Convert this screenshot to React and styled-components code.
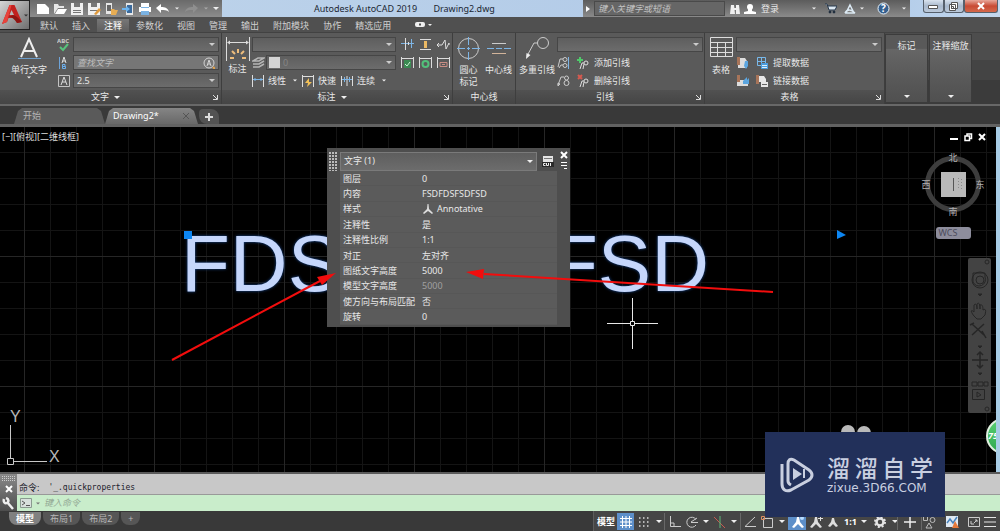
import React, { Component } from "react"
import styled, { createGlobalStyle } from "styled-components"

const sans = `"Noto Sans", "Noto Sans CJK SC", sans-serif`

const GlobalStyle = createGlobalStyle`
  * { box-sizing: border-box; }
  body {
    margin: 0;
    background: #000;
    color: #e8e8e8;
    font: 9px/12px ${sans};
  }
  button, input, select {
    margin: 0;
    padding: 0;
    border: none;
    border-radius: 0;
    background: none;
    color: inherit;
    font: inherit;
    outline: none;
  }
  a { color: inherit; text-decoration: none; }
  svg { display: block; flex: none; }
`

const Page = styled.div`
  display: flex;
  flex-direction: column;
  min-height: 100vh;
  overflow: hidden;
`

/* ---------- title bar and menu ---------- */

const Header = styled.header`
  display: grid;
  grid-template-columns: 30px 1fr;
  background: #505050;
`

const AppButton = styled.button`
  display: flex;
  align-items: center;
  justify-content: center;
  gap: 1px;
  height: 30px;
  border: 1px solid #222;
  border-left: none;
  background: linear-gradient(135deg, #d6d6d6, #a2a2a2 50%, #6e6e6e);
`

const TitleBar = styled.div`
  display: flex;
  height: 17px;
  background: linear-gradient(90deg, #8fb1dc, #bdd3ea 8%, #b4cce8 60%, #8fb4e0 66%, #c4d8ee);
`

const QuickAccess = styled.div`
  display: flex;
  align-items: center;
  gap: 3px;
  width: 192px;
  padding-left: 6px;
  background: linear-gradient(#6a6a6a, #8c8c8c);
`

const ToolButton = styled.button`
  display: flex;
  align-items: center;
  justify-content: center;
  width: ${p => p.$width || 14}px;
  height: 15px;
`

const WindowTitle = styled.h1`
  flex: 1;
  margin: 0;
  padding: 1px 0 0 92px;
  color: #1c2733;
  font: 9px/16px ${sans};
  white-space: pre;
`

const InfoCenter = styled.div`
  display: flex;
  align-items: center;
  width: 327px;
  background: linear-gradient(#5c5c5c, #8a8a8a);
`

const SearchInput = styled.input`
  width: 131px;
  height: 15px;
  margin: 0 4px 0 2px;
  padding: 0 3px;
  background: #666;
  border: 1px solid #4a4a4a;
  font-style: italic;
  &::placeholder { color: #c4c4c4; opacity: 1; }
`

const SignIn = styled.button`
  display: flex;
  align-items: center;
  gap: 5px;
  flex: 1;
  margin-left: 3px;
  text-align: left;
`

const WindowButtons = styled.div`
  display: flex;
  width: 90px;
  height: 13px;
  padding: 0 2px 0 13px;
`

const WindowButton = styled.button`
  display: flex;
  flex: ${p => (p.$close ? 34 : 20)};
  align-items: center;
  justify-content: center;
  border: 1px solid #56606c;
  border-top: none;
  border-radius: 0 0 3px 3px;
  background: ${p =>
    p.$close
      ? "linear-gradient(#e8a79a, #c84a34 50%, #d4694c)"
      : "linear-gradient(#d8e2ee, #a8b8cc 50%, #bccadb)"};
`

const Menu = styled.nav`
  display: flex;
  align-items: flex-end;
  height: 15px;
  padding-left: 3px;
`

const MenuItem = styled.a`
  height: 13px;
  padding: 1px 7px 0;
  color: ${p => (p.$active ? "#fff" : "#d0d0d0")};
  background: ${p => (p.$active ? "linear-gradient(#777, #5e5e5e)" : "none")};
  white-space: nowrap;
`

/* ---------- ribbon ---------- */

const Ribbon = styled.section`
  display: flex;
  height: 74px;
  border-top: 1px solid #424242;
  border-bottom: 2px solid #686868;
  background: linear-gradient(#4d4d4d 38%, #444 38%, #444 66%, #3b3b3b 66%);
`

const Panel = styled.div`
  display: flex;
  flex-direction: column;
  flex: none;
  border-right: 1px solid #3e3e3e;
  background: #5a5a5a;
`

const PanelBody = styled.div`
  display: flex;
  flex: 1;
  padding: 4px ${p => p.$end}px 0 ${p => p.$start}px;
`

const PanelFoot = styled.div`
  display: grid;
  grid-template-columns: ${p => (p.$plain ? "8px 1fr 8px" : "8px 1fr 18px")};
  align-items: center;
  height: 14px;
  background: linear-gradient(#515151, #454545);
  text-align: center;
  > svg { justify-self: end; margin-right: 3px; }
`

const FootTitle = styled.button`
  display: flex;
  grid-column: 2;
  align-items: center;
  justify-content: center;
  gap: 5px;
`

const BigButton = styled.button`
  display: flex;
  flex-direction: column;
  align-items: center;
  width: ${p => p.$width}px;
  height: 52px;
  line-height: 12px;
  white-space: nowrap;
`

const Stack = styled.div`
  display: flex;
  flex-direction: column;
  gap: 3px;
  padding-left: ${p => p.$indent || 0}px;
`

const Line = styled.div`
  display: flex;
  align-items: center;
  height: 15px;
  gap: ${p => p.$gap || 0}px;
`

const IconCell = styled.span`
  display: flex;
  width: ${p => p.$width}px;
`

const SmallButton = styled.button`
  display: flex;
  align-items: center;
  gap: 4px;
  padding-right: ${p => p.$end || 0}px;
  white-space: nowrap;
`

const ComboBox = styled.div`
  display: grid;
  align-items: center;
  width: ${p => p.$width}px;
  height: 15px;
  border: 1px solid #464646;
  background: linear-gradient(#5e5e5e, #6c6c6c);
  > * { grid-area: 1 / 1; }
  > svg { justify-self: end; margin-right: 3px; pointer-events: none; }
`

const Select = styled.select`
  width: 100%;
  height: 13px;
  padding-left: ${p => p.$indent || 3}px;
  appearance: none;
  color: ${p => (p.$muted ? "#858585" : "inherit")};
`

const FindInput = styled.input`
  width: 100%;
  height: 13px;
  padding-left: 3px;
  background: #767676;
  font-style: italic;
  &::placeholder { color: #bdbdbd; opacity: 1; }
`

const Swatch = styled.span`
  width: 11px;
  height: 11px;
  margin-left: 2px;
  background: #d4d4d4;
  pointer-events: none;
`

const MiniPanel = styled.button`
  display: flex;
  flex-direction: column;
  align-items: center;
  justify-content: space-between;
  width: 43px;
  margin: 1px 1px 1px 0;
  padding: 5px 0 4px;
  border: 1px solid #3c3c3c;
  background: linear-gradient(#595959 20%, #666 21%, #5a5a5a 60%, #505050);
  white-space: nowrap;
`

/* ---------- drawing tabs ---------- */

const FileTabs = styled.nav`
  display: flex;
  align-items: flex-end;
  height: 21px;
  padding-left: 14px;
  border-bottom: 3px solid #626262;
  background: #393939;
`

const FileTab = styled.a`
  display: flex;
  align-items: center;
  justify-content: space-between;
  width: ${p => (p.$active ? 93 : 91)}px;
  height: 16px;
  padding: 0 9px 0 ${p => (p.$active ? 8 : 9)}px;
  clip-path: polygon(0 100%, 4px 3px, 8px 0, calc(100% - 8px) 0, calc(100% - 4px) 3px, 100% 100%);
  color: ${p => (p.$active ? "#fff" : "#b4b4b4")};
  background: ${p => (p.$active ? "linear-gradient(#858585, #686868)" : "#5a5a5a")};
`

const NewTab = styled.button`
  display: flex;
  align-items: center;
  justify-content: center;
  width: 20px;
  height: 15px;
  margin-left: 1px;
  border-radius: 4px 8px 0 8px;
  background: #535353;
`

/* ---------- model space ---------- */

const Canvas = styled.main`
  position: relative;
  flex: 1;
  overflow: hidden;
  border-right: 4px solid #a8cde6;
  background-color: #000;
  background-image: linear-gradient(90deg, #262626 1px, transparent 1px),
    linear-gradient(#262626 1px, transparent 1px),
    linear-gradient(90deg, #141414 1px, transparent 1px),
    linear-gradient(#141414 1px, transparent 1px);
  background-size: 130px 130px, 130px 130px, 26px 26px, 26px 26px;
  background-position: 24px 0, 0 129px, 24px 0, 0 25px;
`

const ViewLabel = styled.button`
  position: absolute;
  top: 4px;
  left: 2px;
  color: #ddd;
`

const ViewButtons = styled.div`
  position: absolute;
  top: 6px;
  right: 9px;
  display: flex;
  gap: 5px;
`

const DrawingText = styled.div`
  position: absolute;
  top: 92px;
  left: 181px;
  display: flex;
  gap: 208px;
  color: #c5d6fb;
  font: 80px/90px "Liberation Sans", Arial, sans-serif;
  text-shadow: 0 0 3px #1d4f9c;
`

const Markup = styled.svg`
  position: absolute;
  top: 0;
  left: 0;
  pointer-events: none;
`

const UcsIcon = styled.svg`
  position: absolute;
  bottom: 4px;
  left: 0;
`

const ViewCube = styled.div`
  position: absolute;
  top: 25px;
  right: 8px;
  display: flex;
  flex-direction: column;
  align-items: center;
  gap: 7px;
  width: 70px;
`

const WcsButton = styled.button`
  width: 35px;
  height: 12px;
  padding-right: 10px;
  border-radius: 3px;
  background: #8d8d9c;
  color: #4c4c5c;
  line-height: 12px;
`

const NavBar = styled.div`
  position: absolute;
  top: 131px;
  right: 5px;
  width: 23px;
  height: 155px;
  border-radius: 2px;
  background: #434343;
`

const Props = styled.section`
  position: absolute;
  top: 21px;
  left: 327px;
  display: grid;
  grid-template-columns: 13px 217px 13px;
  width: 243px;
  height: 179px;
  padding-top: 3px;
  background: #4e4e4e;
`

const Grip = styled.div`
  height: 19px;
  margin: 1px 3px 0 2px;
  background: radial-gradient(circle at 1px 1px, #bbb 1px, transparent 1px) 0 0 / 3px 3px;
`

const PropsHead = styled.div`
  display: flex;
  align-items: center;
  gap: 5px;
  height: 20px;
`

const ObjectType = styled(ComboBox)`
  height: 19px;
  border-color: #7a7a7a;
`

const PropTable = styled.table`
  width: 217px;
  height: 154px;
  border-collapse: collapse;
  background: #5b5b5b;
  th, td {
    padding: 1px 0 0 3px;
    border-bottom: 1px solid #575757;
    font-weight: 400;
    text-align: left;
    white-space: nowrap;
    line-height: 12px;
  }
  th { width: 79px; }
`

const PropValue = styled.span`
  display: flex;
  align-items: center;
  gap: 3px;
  color: ${p => (p.$muted ? "#a0a0a0" : "inherit")};
`

const PropsSide = styled.div`
  display: flex;
  flex-direction: column;
  align-items: center;
  gap: 2px;
`

const FloatBall = styled.button`
  position: absolute;
  top: 291px;
  right: -26px;
  width: 36px;
  height: 36px;
  padding: 0 22px 0 0;
  border: 2px solid #e0f0e0;
  border-radius: 50%;
  background: linear-gradient(#59cf74, #2fa84e);
  color: #fff;
  font-style: italic;
  font-weight: 700;
`

/* ---------- command line ---------- */

const Command = styled.section`
  display: grid;
  grid-template-columns: 17px 1fr;
  height: 39px;
  border-top: 2px solid #5a5a5a;
`

const CommandSide = styled.div`
  display: flex;
  flex-direction: column;
  align-items: center;
  justify-content: space-between;
  padding: 2px 0 1px;
  background: linear-gradient(#8a8a8a, #4e4e4e);
`

const History = styled.output`
  display: flex;
  align-items: flex-end;
  gap: 9px;
  height: 21px;
  padding: 0 1px 0 2px;
  background: #c8c8c8;
  color: #1c1c2c;
  border-bottom: 1px solid #999;
  code { font: 8px/12px "DejaVu Sans Mono", monospace; }
`

const Prompt = styled.label`
  display: flex;
  align-items: center;
  gap: 4px;
  height: 16px;
  padding-left: 3px;
  background: #c9edcb;
`

const PromptInput = styled.input`
  flex: 1;
  font-style: italic;
  &::placeholder { color: #93a894; opacity: 1; }
`

/* ---------- status bar ---------- */

const StatusBar = styled.footer`
  display: flex;
  justify-content: space-between;
  height: 20px;
  background: #393939;
`

const LayoutTabs = styled.nav`
  display: flex;
  gap: 2px;
  padding: 1px 0 0 9px;
`

const LayoutTab = styled.a`
  height: 13px;
  padding: 0 7px;
  border-radius: 0 0 8px 8px;
  line-height: 13px;
  color: ${p => (p.$active ? "#fff" : "#b8b8b8")};
  font-weight: ${p => (p.$active ? 700 : 400)};
  background: ${p => (p.$active ? "#808080" : "#565656")};
`

const StatusTools = styled.div`
  display: flex;
  padding-top: 2px;
  border-left: 1px solid #5c5c5c;
  background: #464646;
`

const StatusCell = styled.button`
  display: flex;
  align-items: center;
  justify-content: center;
  width: ${p => p.$width}px;
  height: 17px;
  border-left: 1px solid ${p => (p.$split ? "#686868" : "transparent")};
  background: ${p => (p.$on ? "#5d8fc9" : "none")};
  color: #fff;
  font-weight: 700;
  white-space: nowrap;
`

const Watermark = styled.aside`
  position: fixed;
  right: 55px;
  bottom: 14px;
  display: flex;
  align-items: center;
  gap: 12px;
  width: 180px;
  height: 85px;
  padding-left: 14px;
  background: #22305a;
  color: #c9cfe0;
`

const Brand = styled.div`
  width: 106px;
  font: 12px/14px "DejaVu Sans", sans-serif;
`

const BrandName = styled.div`
  display: flex;
  justify-content: space-between;
  padding-bottom: 2px;
  font: 500 23px/24px "Noto Sans CJK SC", sans-serif;
`

/* ---------- icons ---------- */

const Caret = ({ size = 6, color = "#eee" }) => (
  <svg width={size} height="3" viewBox="0 0 6 3" fill={color}>
    <path d="M0 0h6L3 3z" />
  </svg>
)

const drawings = {
  app: (
    <g stroke="none">
      <path fill="#c2211f" d="M1 20 8.5 1h5L21 18l-5 1-2-5H7.500l-1.500 4z" />
      <path fill="#e8433c" d="M1 20 8.500 1h2L6 18z" />
      <path fill="#b6b6b6" d="M10.500 6 8.500 11H13z" />
      <path fill="#8e1512" d="M6 14c3-2 6-1 10 5l5-1c-3-3-5-6-9-7z" />
    </g>
  ),
  newFile: <path fill="#fff" stroke="none" d="M1 2h8l4 4v6H1z" />,
  open: (
    <g stroke="none">
      <path fill="#e6e6e6" d="M1 12V2h4l1 2h5v2H5z" />
      <path fill="#fff" d="M5 7h9l-3 5H2z" />
    </g>
  ),
  save: (
    <g stroke="none">
      <path fill="#f0f0f0" d="M1 1h12v12H1z" />
      <path fill="#777" d="M4 1h6v4H4zM3 8h8v1H3zM3 10h8v1H3z" />
    </g>
  ),
  saveAs: (
    <g stroke="none">
      <path fill="#f0f0f0" d="M1 1h12v12H1z" />
      <path fill="#777" d="M4 1h6v4H4zM3 8h8v1H3z" />
      <path fill="#e09a3c" d="m7 12 5-6 2 2-5 5z" />
    </g>
  ),
  cloudOpen: (
    <g stroke="none">
      <path fill="#e6e6e6" d="M2 1h6v11H2z" />
      <path fill="#666" d="M3 3h4v6H3z" />
      <path fill="#e7ad54" d="M7 7h3l1 1h3l-2 5H7z" />
    </g>
  ),
  cloudSave: (
    <g stroke="none">
      <path fill="#e6e6e6" d="M5 1h7v12H5z" />
      <path fill="#3b6a9c" d="M6 3h5v8H6z" />
      <path fill="#6db4ee" d="M1 6h4V4l4 3-4 3V8H1z" />
    </g>
  ),
  print: (
    <g stroke="none">
      <path fill="#fff" d="M3 1h8v4H3zM1 5h12v5H1z" />
      <path fill="#7bb3e3" d="M3 9h8v4H3zM3 5h8v1H3z" />
    </g>
  ),
  undo: <path fill="#fff" stroke="none" d="m1 6 5-4v3c4 0 7 1 8 5-2-2-5-2-8-2v3z" />,
  redo: <path fill="#8f8f8f" stroke="none" d="M13 6 8 2v3c-4 0-7 1-8 5 2-2 5-2 8-2v3z" />,
  binoculars: (
    <g fill="#f0f0f0" stroke="none">
      <path d="M2 2h3l1 9H1zM7 2h3l1 9H7zM5 5h2v2H5z" />
    </g>
  ),
  user: (
    <g fill="#fff" stroke="none">
      <circle cx="6" cy="4" r="3" />
      <path d="M4 6h4v2l4 1v2H0V9l4-1z" />
    </g>
  ),
  cart: (
    <g stroke="#25364a">
      <path fill="#dce8f2" d="M1 2h2l2 6h6l2-4H4" />
      <circle cx="6" cy="10" r="1" />
      <circle cx="10" cy="10" r="1" />
    </g>
  ),
  a360: <path fill="none" stroke="#dceaf4" strokeWidth="1.500" d="m6 2 4 8H2zM1 10c2-4 6-4 10 0" />,
  bigA: (
    <g fill="none">
      <path stroke="#eee" strokeWidth="2" d="m3 20 8-18 8 18M6 14h10" />
      <path stroke="#6d9dca" d="M0 21.500h23" />
    </g>
  ),
  spell: (
    <g>
      <text x="0" y="5" fontSize="6" fontWeight="700" fill="#ccc" stroke="none">ABC</text>
      <path fill="none" stroke="#58c27c" strokeWidth="2" d="m3 9 3 3 5-6" />
    </g>
  ),
  textAlign: (
    <g fill="none">
      <path d="M2.500 1v12" stroke="#6da3d8" />
      <path d="m5 7 2-6 2 6M5.500 5h3" stroke="#ddd" />
      <path d="M5.500 8.500H8v2H5.500zM5.500 10.500h3v2h-3z" stroke="#6db0ee" />
    </g>
  ),
  textHeight: (
    <g>
      <path fill="none" stroke="#c4c4c4" d="M1.500 1.500h11v11h-11z" />
      <path fill="none" stroke="#ddd" d="M4 11 7 3l3 8M5 8h4" />
    </g>
  ),
  findText: (
    <g fill="none" stroke="#d4d4d4">
      <circle cx="6" cy="6" r="5" />
      <path d="m4 9 2-6 2 6M5 7h2" />
      <path stroke="#e2a24c" strokeWidth="2" d="m10 10 2 2" />
    </g>
  ),
  dimension: (
    <g fill="none">
      <path stroke="#ddd" d="M.5 0v24M23.500 0v24M2 5.500h20" />
      <path fill="#ddd" stroke="none" d="m1 5.500 3-2v4zM23 5.500l-3-2v4z" />
      <path stroke="#eebd7c" strokeWidth="2" d="M12 12v4M6 14l3 3M18 14l-3 3M4 21h4M16 21h4" />
    </g>
  ),
  layers: (
    <g fill="none" stroke="#b5b5b5" strokeWidth="1.500">
      <path d="m1 5 5-3h6L7 5zM1 8h6l5-3M1 11h6l5-3" />
    </g>
  ),
  dimBreak: (
    <g fill="none">
      <path stroke="#7db5e6" d="M0 5.500h13M4.500 3v5M10.500 1v9" />
      <path stroke="#ddd" d="M4.500 0v12M7.500 4v3" />
    </g>
  ),
  dimSpace: (
    <g fill="none">
      <path stroke="#ddd" d="M1 1.500h11M1 11.500h11" />
      <path stroke="#ebb964" strokeWidth="3" d="M6.500 3v7" />
    </g>
  ),
  jog: <path fill="none" stroke="#ddd" d="M0 7h5l3-5 1 9 3-6v2M0 7l2-2M0 7l2 2" />,
  dimCheck: (
    <g fill="none">
      <path stroke="#ddd" d="M.5 1v11M12.500 1v11M1 2.500h11" />
      <path fill="#3b8a52" stroke="none" d="M3 4h7v8H3z" />
      <path stroke="#c8f2d2" d="m4 8 2 2 3-4" />
    </g>
  ),
  dimUpdate: (
    <g fill="none">
      <path stroke="#ddd" d="M.5 1v11M12.500 1v11M1 2.500h11" />
      <circle cx="6.500" cy="8" r="3" stroke="#52c07a" strokeWidth="2" />
    </g>
  ),
  dimRemove: (
    <g fill="none">
      <path stroke="#ddd" d="M.5 1v11M12.500 1v11M1 2.500h11" />
      <path stroke="#c98d84" d="M3 6.500h7v4H3zM5 8.500h3" />
    </g>
  ),
  linear: (
    <g fill="none">
      <path stroke="#ddd" d="M.5 1v12M11.500 1v12" />
      <path stroke="#7db5e6" d="M1 5.500h10M3 4v3M9 4v3" />
    </g>
  ),
  quick: (
    <g fill="none">
      <path stroke="#ddd" d="M.5 1v12M11.500 1v12M1 2.500h10" />
      <path fill="#f2c057" stroke="none" d="M7 4 3 9h3l-1 4 5-5H7z" />
    </g>
  ),
  continued: (
    <g fill="none">
      <path stroke="#ddd" d="M.5 2v10M6 2v10M11.500 2v10" />
      <path stroke="#7db5e6" d="M1 5.500h10M3.500 3v5M8.500 3v5" />
    </g>
  ),
  centerMark: (
    <g fill="none">
      <circle cx="11.500" cy="11.500" r="10" stroke="#ccc" />
      <path stroke="#7db5e6" d="M0 11.500h8m2 0h3m2 0h8M11.500 0v8m0 2v3m0 2v8" />
    </g>
  ),
  centerLine: (
    <g fill="none">
      <path stroke="#ccc" d="M5 6.500h14" />
      <path stroke="#7db5e6" d="M0 11.500h7m2 0h6m2 0h7" />
      <path stroke="#d2b49a" d="M5 16.500h14" />
    </g>
  ),
  leader: (
    <g fill="none" stroke="#ccc">
      <circle cx="18" cy="6" r="5.500" />
      <path d="M12.500 6H9L2 19" />
      <path fill="#eee" stroke="none" d="m1 22 .5-6 4 2z" />
    </g>
  ),
  leaderAlign: (
    <g fill="none" stroke="#ccc">
      <path d="M11.500 1v12" stroke="#7db5e6" />
      <circle cx="8" cy="3.500" r="2" />
      <circle cx="8" cy="9.500" r="2" />
      <path d="M6 3H3L1 11M6 9H4l-2 3" />
    </g>
  ),
  leaderCollect: (
    <g fill="none" stroke="#ccc">
      <circle cx="9.500" cy="4" r="2" />
      <circle cx="9.500" cy="9" r="2.500" />
      <path d="M7 3H4L1 11" />
      <path d="m1 12 0-3 2 1z" />
    </g>
  ),
  leaderAdd: (
    <g fill="none" stroke="#ddd">
      <circle cx="9" cy="7" r="2" />
      <path d="M7 7H5l-2 6M7 8l-1 5" />
      <path stroke="#4fc96a" strokeWidth="2" d="M0 4h6M3 1v6" />
    </g>
  ),
  leaderRemove: (
    <g fill="none" stroke="#ddd">
      <circle cx="9" cy="7" r="2" />
      <path d="M7 7H5l-2 6M7 8l-1 5" />
      <path stroke="#d65a50" strokeWidth="2" d="m1 1 4 4m0-4L1 5" />
    </g>
  ),
  table: (
    <g fill="none" stroke="#ddd">
      <path d="M.5.5h22v19H.5zM.5 5.500h22M.5 10.500h22M.5 15.500h22M7.500 5v15M15.500 5v15" />
    </g>
  ),
  linkDown: (
    <g stroke="none">
      <path fill="#ddd" d="M2 2h7l2 3v7H2z" />
      <path fill="#a8755a" d="M1 1h3v8H1z" />
      <path fill="#5ca6e0" d="M9 5h3v5l-2 3-2-3z" />
    </g>
  ),
  linkUp: (
    <g stroke="none">
      <path fill="#ddd" d="M1 6h11v6H1z" />
      <path fill="#a8755a" d="M1 1h3v7H1z" />
      <path fill="#5ca6e0" d="m7 7 4-4v3l2-2v6H7z" />
    </g>
  ),
  extract: (
    <g>
      <path fill="none" stroke="#78b8ea" d="M1.500 1.500h8v8h-8zM1 5.500h9M5.500 1v9" />
      <path fill="#4b9cdd" stroke="none" d="M5 7h7v6H5z" />
      <path stroke="#dceefb" d="M6 9.500h5M6 11.500h5" />
    </g>
  ),
  dataLink: (
    <g stroke="none">
      <path fill="#a8755a" d="M0 1h3v9H0z" />
      <path fill="#e8e8e8" d="M3 2h5l2 3v3H3zM5 8h7v5H5z" />
      <path fill="#666" d="M6 10h5v1H6z" />
    </g>
  ),
  launcher: <path fill="none" stroke="#ddd" d="M1 1l4 4M5.500 1v4.500H1" />,
  closeX: <path fill="none" stroke="#fff" strokeWidth="2" d="m1 1 6 6m0-6L1 7" />,
  minimize: <path stroke="#fff" strokeWidth="2" d="M0 6h8" />,
  restore: (
    <path fill="none" stroke="#fff" strokeWidth="1.500" d="M1 3h4.500v4.500H1zM3 3V1h4.500v4.500H6" />
  ),
  plus: <path fill="none" stroke="#ddd" strokeWidth="2" d="M4 0v8M0 4h8" />,
  annotative: <path fill="#ddd" stroke="none" d="M5.500 0h1L7 5l4 4-1 1-4-3-4 3-1-1 4-4z" />,
  cui: (
    <g stroke="none">
      <path fill="#e4e4e4" d="M1 1h10v6H1z" />
      <path fill="#777" d="M2 3h8v1H2z" />
      <path fill="#2a2a2a" d="M0 7h12v5H0z" />
      <path stroke="#eee" fill="none" d="M3.500 8.500h-2v2h2M4.500 8v2.500h2V8M8.500 8v3" />
    </g>
  ),
  settings: <path stroke="#fff" d="M0 1.500h6M0 4.500h6M3 7.500h3" />,
  wrench: (
    <path
      fill="none"
      stroke="#eee"
      strokeWidth="2.500"
      d="m5 5 6 7M2 2c-1 3 1 5 3 4s2-4-1-5"
    />
  ),
  terminal: (
    <g fill="none">
      <path fill="#d8e0dc" stroke="#8a9a90" d="M.5.5h11v9H.5z" />
      <path stroke="#555" d="m2 3 3 2-3 2M6 7.500h4" />
    </g>
  ),
  gridOn: <path stroke="#fff" d="M1 3.500h12M1 7h12M1 10.500h12M3.500 1v12M7 1v12M10.500 1v12" />,
  snap: (
    <path stroke="#ddd" strokeWidth="1.500" strokeDasharray="1.500 2.500" d="M2 3h10M2 7h10M2 11h10" />
  ),
  ortho: <path fill="none" stroke="#ccc" d="M2.500 1v10.500H13M2.500 8H6v3.500" />,
  polar: (
    <g fill="none" stroke="#ccc">
      <path d="M11 4.500A5 5 0 1 0 11 10M6 7l6-4M6 7.500h7" />
    </g>
  ),
  isometric: (
    <g fill="none">
      <path stroke="#c85a50" d="m1 2 11 11" />
      <path stroke="#5cb878" d="M7 1v12" />
    </g>
  ),
  track: <path fill="none" stroke="#ccc" d="M12 2 2 11.500h11" />,
  osnap: (
    <g fill="none">
      <path stroke="#ccc" d="M3.500 3.500h9v9h-9z" />
      <path stroke="#dd8f62" d="M1.500 1.500h3v3h-3z" />
    </g>
  ),
  annoOn: (
    <g fill="#fff" stroke="none">
      <path d="M6 2h2l1 5 4 5-2 1-4-4-4 4-2-1 4-5z" />
      <circle cx="11" cy="3" r="2" fill="#b8dcff" />
    </g>
  ),
  annoAuto: (
    <g fill="#ddd" stroke="none">
      <path d="M6 2h2l1 5 4 5-2 1-4-4-4 4-2-1 4-5z" />
      <path d="M9 3h5v1H9zM11 1h1v5h-1z" />
    </g>
  ),
  annoScale: <path fill="#ddd" stroke="none" d="M6 3h2l1 4 3 4-2 1-3-3-3 3-2-1 3-4z" />,
  gear: (
    <g fill="none" stroke="#e4e4e4">
      <circle cx="7" cy="7" r="3.500" strokeWidth="2.500" />
      <circle cx="7" cy="7" r="5" strokeWidth="2" strokeDasharray="2 1.930" />
    </g>
  ),
  cross: <path stroke="#eee" strokeWidth="1.500" d="M7 1v12M1 7h12" />,
  isolate: (
    <g fill="none" stroke="#bbb">
      <path d="M1.500 1.500h4v4h-4zM7 8l3 5H4z" />
      <circle cx="10.500" cy="5" r="2.500" />
    </g>
  ),
  graphics: (
    <g stroke="none">
      <path fill="#dfe8f2" d="M1 1h12v11H1z" />
      <path fill="none" stroke="#4682bd" strokeWidth="1.500" d="m2 8 3-4 3 4 4-6" />
      <path fill="#e5793a" d="m10 6 4 7H7z" />
    </g>
  ),
  clean: <path fill="none" stroke="#ccc" d="M1.500 2.500h11v9h-11zM4 6v3h3M10 5 7 8M8 5h2v2" />,
  menu: <path stroke="#e4e4e4" d="M1 2.500h12M1 7h12M1 11.500h12" />,
}

const Icon = ({ name, size = 14, height }) => (
  <svg width={size} height={height || size} viewBox={`0 0 ${size} ${height || size}`}>
    {drawings[name]}
  </svg>
)

const Combo = ({ width, label, value = "", children, indent, muted }) => (
  <ComboBox $width={width}>
    <Select aria-label={label} $indent={indent} $muted={muted} defaultValue={value}>
      <option>{value}</option>
    </Select>
    {children}
    <Caret color="#ccc" />
  </ComboBox>
)

const Foot = ({ title, more, launcher = true }) => (
  <PanelFoot $plain={!launcher}>
    <FootTitle>
      {title}
      {more && <Caret />}
    </FootTitle>
    {launcher && <Icon name="launcher" size={6} />}
  </PanelFoot>
)

/* ---------- data ---------- */

const quickTools = ["newFile", "open", "save", "saveAs", "cloudOpen", "cloudSave", "print", "undo"]

const menuItems = [
  "默认", "插入", "注释", "参数化", "视图", "管理", "输出", "附加模块", "协作", "精选应用",
]

const properties = [
  ["图层", "0"],
  ["内容", "FSDFDSFSDFSD"],
  ["样式", "Annotative"],
  ["注释性", "是"],
  ["注释性比例", "1:1"],
  ["对正", "左对齐"],
  ["图纸文字高度", "5000"],
  ["模型文字高度", "5000"],
  ["使方向与布局匹配", "否"],
  ["旋转", "0"],
]

const statusItems = [
  { text: "模型", width: 23 },
  { icon: "gridOn", width: 17, on: true },
  { icon: "snap", width: 18 },
  { caret: true, width: 12 },
  { icon: "ortho", width: 20, split: true },
  { icon: "polar", width: 14 },
  { caret: true, width: 14 },
  { icon: "isometric", width: 14 },
  { caret: true, width: 14 },
  { icon: "track", width: 18, split: true },
  { icon: "osnap", width: 16 },
  { caret: true, width: 14 },
  { icon: "annoOn", width: 18, on: true },
  { icon: "annoAuto", width: 18 },
  { icon: "annoScale", width: 17 },
  { text: "1:1", width: 18 },
  { caret: true, width: 8 },
  { icon: "gear", width: 24 },
  { caret: true, width: 6 },
  { icon: "cross", width: 24, split: true },
  { icon: "isolate", width: 14, split: true },
  { icon: "graphics", width: 32 },
  { icon: "clean", width: 12 },
  { icon: "menu", width: 21 },
]

/* ---------- sections ---------- */

const TopBar = () => (
  <Header>
    <AppButton aria-label="应用程序菜单">
      <Icon name="app" size={22} />
      <Caret size={4} color="#333" />
    </AppButton>
    <div>
      <TitleBar>
        <QuickAccess>
          {quickTools.map(name => (
            <ToolButton key={name} aria-label={name}>
              <Icon name={name} />
            </ToolButton>
          ))}
          <ToolButton $width={10} aria-label="放弃列表"><Caret size={4} /></ToolButton>
          <ToolButton aria-label="重做"><Icon name="redo" /></ToolButton>
          <ToolButton $width={8} aria-label="重做列表"><Caret size={4} color="#aaa" /></ToolButton>
          <ToolButton $width={6} aria-label="自定义"><Caret /></ToolButton>
        </QuickAccess>
        <WindowTitle>{"Autodesk AutoCAD 2019       Drawing2.dwg"}</WindowTitle>
        <InfoCenter>
          <ToolButton $width={9} aria-label="展开">
            <svg width="4" height="6" fill="#fff"><path d="M0 0v6l4-3z" /></svg>
          </ToolButton>
          <SearchInput aria-label="搜索" placeholder="键入关键字或短语" />
          <Icon name="binoculars" size={12} />
          <SignIn>
            <Icon name="user" size={12} />
            登录
          </SignIn>
          <Caret size={4} />
          <ToolButton $width={28} aria-label="商店"><Icon name="cart" size={13} /></ToolButton>
          <Icon name="a360" size={12} />
          <ToolButton $width={12} aria-label="更多"><Caret size={4} /></ToolButton>
          <ToolButton $width={30} aria-label="帮助">
            <svg width="13" height="13">
              <circle cx="6.500" cy="6.500" r="5.500" fill="#35608f" stroke="#e9f1f8" />
              <text x="4" y="10" fontSize="10" fontWeight="700" fill="#fff">?</text>
            </svg>
          </ToolButton>
          <ToolButton $width={12} aria-label="帮助菜单"><Caret size={4} /></ToolButton>
        </InfoCenter>
        <WindowButtons>
          <WindowButton aria-label="最小化">
            <svg width="10" height="5"><path fill="#fff" stroke="#555" d="M.5 1.500h9v3h-9z" /></svg>
          </WindowButton>
          <WindowButton aria-label="还原">
            <svg width="9" height="9">
              <path fill="#fff" stroke="#555" d="M2.500.5h6v6h-6zM.5 2.500h6v6h-6zM2.500 4.500h2v2h-2z" />
            </svg>
          </WindowButton>
          <WindowButton $close aria-label="关闭"><Icon name="closeX" size={8} /></WindowButton>
        </WindowButtons>
      </TitleBar>
      <Menu>
        {menuItems.map(item => (
          <MenuItem key={item} href="#" $active={item === "注释"}>{item}</MenuItem>
        ))}
        <ToolButton $width={50} aria-label="功能区选项">
          <svg width="17" height="6" fill="#eee">
            <path d="M2 0h6a2 2 0 0 1 2 2v1a2 2 0 0 1-2 2H2a2 2 0 0 1-2-2V2a2 2 0 0 1 2-2zm2 1.500v2h2v-2zM13 2h4l-2 2z" />
          </svg>
        </ToolButton>
      </Menu>
    </div>
  </Header>
)

const RibbonBar = () => (
  <Ribbon>
    <Panel>
      <PanelBody $start={5} $end={2}>
        <BigButton $width={48}>
          <Icon name="bigA" size={23} height={27} />
          单行文字
          <Caret size={4} />
        </BigButton>
        <Stack $indent={4}>
          <Line>
            <IconCell $width={16}><Icon name="spell" size={13} height={14} /></IconCell>
            <Combo width={146} label="文字样式" />
          </Line>
          <Line>
            <IconCell $width={16}><Icon name="textAlign" /></IconCell>
            <ComboBox $width={146}>
              <FindInput aria-label="查找文字" placeholder="查找文字" />
              <Icon name="findText" size={12} />
            </ComboBox>
          </Line>
          <Line>
            <IconCell $width={16}><Icon name="textHeight" /></IconCell>
            <Combo width={146} label="文字高度" value="2.5" />
          </Line>
        </Stack>
      </PanelBody>
      <Foot title="文字" more />
    </Panel>

    <Panel>
      <PanelBody $start={2} $end={2}>
        <BigButton $width={27}>
          <Icon name="dimension" size={24} height={26} />
          标注
        </BigButton>
        <Stack $indent={1}>
          <Line $gap={5}>
            <Combo width={144} label="标注样式" />
            <Icon name="dimBreak" size={13} />
            <Icon name="dimSpace" size={13} />
            <Icon name="jog" size={13} />
          </Line>
          <Line $gap={5}>
            <Line>
              <IconCell $width={14}><Icon name="layers" size={13} /></IconCell>
              <Combo width={130} label="标注图层" value="0" indent={16} muted><Swatch /></Combo>
            </Line>
            <Icon name="dimCheck" size={13} />
            <Icon name="dimUpdate" size={13} />
            <Icon name="dimRemove" size={13} />
          </Line>
          <Line $gap={5}>
            <SmallButton $end={2}><Icon name="linear" size={12} height={14} />线性</SmallButton>
            <Caret size={4} />
            <SmallButton><Icon name="quick" size={12} height={14} />快速</SmallButton>
            <SmallButton $end={2}><Icon name="continued" size={12} height={14} />连续</SmallButton>
            <Caret size={4} />
          </Line>
        </Stack>
      </PanelBody>
      <Foot title="标注" more />
    </Panel>

    <Panel>
      <PanelBody $start={2} $end={0}>
        <BigButton $width={27}>
          <Icon name="centerMark" size={23} height={27} />
          圆心<br />标记
        </BigButton>
        <BigButton $width={33}>
          <Icon name="centerLine" size={24} height={27} />
          中心线
        </BigButton>
      </PanelBody>
      <Foot title="中心线" launcher={false} />
    </Panel>

    <Panel>
      <PanelBody $start={2} $end={1}>
        <BigButton $width={38}>
          <Icon name="leader" size={24} height={27} />
          多重引线
        </BigButton>
        <Stack $indent={1}>
          <Combo width={146} label="多重引线样式" />
          <Line>
            <IconCell $width={20}><Icon name="leaderAlign" /></IconCell>
            <SmallButton><Icon name="leaderAdd" size={13} />添加引线</SmallButton>
          </Line>
          <Line>
            <IconCell $width={20}><Icon name="leaderCollect" /></IconCell>
            <SmallButton><Icon name="leaderRemove" size={13} />删除引线</SmallButton>
          </Line>
        </Stack>
      </PanelBody>
      <Foot title="引线" />
    </Panel>

    <Panel>
      <PanelBody $start={3} $end={2}>
        <BigButton $width={26}>
          <Icon name="table" size={23} height={27} />
          表格
        </BigButton>
        <Stack $indent={2}>
          <Combo width={146} label="表格样式" />
          <Line>
            <IconCell $width={20}><Icon name="linkDown" /></IconCell>
            <SmallButton><Icon name="extract" size={13} />提取数据</SmallButton>
          </Line>
          <Line>
            <IconCell $width={20}><Icon name="linkUp" /></IconCell>
            <SmallButton><Icon name="dataLink" size={13} />链接数据</SmallButton>
          </Line>
        </Stack>
      </PanelBody>
      <Foot title="表格" />
    </Panel>

    <MiniPanel>标记<Caret /></MiniPanel>
    <MiniPanel>注释缩放<Caret /></MiniPanel>
  </Ribbon>
)

const QuickProperties = () => (
  <Props aria-label="快捷特性">
    <Grip />
    <div>
      <PropsHead>
        <ObjectType $width={197}>
          <Select aria-label="对象类型" defaultValue="文字 (1)">
            <option>文字 (1)</option>
          </Select>
          <Caret />
        </ObjectType>
        <Icon name="cui" size={12} />
      </PropsHead>
      <PropTable>
        <tbody>
          {properties.map(([name, value]) => (
            <tr key={name}>
              <th scope="row">{name}</th>
              <td>
                <PropValue $muted={name === "模型文字高度"}>
                  {name === "样式" && <Icon name="annotative" size={12} height={10} />}
                  {value}
                </PropValue>
              </td>
            </tr>
          ))}
        </tbody>
      </PropTable>
    </div>
    <PropsSide>
      <button aria-label="关闭"><Icon name="closeX" size={8} /></button>
      <button aria-label="选项"><Icon name="settings" size={6} height={8} /></button>
    </PropsSide>
  </Props>
)

const Compass = () => (
  <ViewCube>
    <svg width="70" height="68" viewBox="0 0 70 68">
      <circle cx="35" cy="32" r="25.500" fill="none" stroke="#3d3d3d" strokeWidth="5" />
      <path fill="#b9b9b9" d="M23 20h25v25H23z" />
      <path stroke="#555" fill="none" d="M35.500 26v13" />
      <path stroke="#8a8a8a" fill="none" strokeDasharray="1 2" d="M40.500 26v12M43.500 27v10" />
      <g fontSize="9" fill="#b0b0b0" textAnchor="middle">
        <text x="35" y="9">北</text>
        <text x="35" y="63">南</text>
        <text x="8" y="36">西</text>
        <text x="62" y="36">东</text>
      </g>
    </svg>
    <WcsButton>WCS</WcsButton>
  </ViewCube>
)

const Navigation = () => (
  <NavBar>
    <svg width="23" height="155" fill="none" stroke="#262626">
      <circle cx="19" cy="4" r="2" />
      <path d="M5 15h12v4a6 6 0 0 1-12 5z" />
      <circle cx="12" cy="22" r="8" />
      <circle cx="12" cy="22" r="4" />
      <path d="M10 36h4l-2 2zM10 88h4l-2 2zM10 115h4l-2 2z" fill="#262626" />
      <path d="M6 58c-4-5-3-7 0-4V47c2-2 3 0 3 4v-5c2-2 3 0 3 5v-4c2-1 3 1 3 5 3-2 3 1 2 5l-4 4H9z" />
      <path strokeWidth="1.500" d="m4 66 12 11M16 66 4 77M14 73l4 7M2 67l4-2" />
      <path strokeWidth="1.500" d="M12 94v16M4 102h16M9 97l3-3 3 3M9 107l3 3 3-3" />
      <path d="M4.500 131.500h12v10h-12zM9 134v5l4-2zM4 124h5v4H4zM10 124h5v4h-5zM16 124h4v4h-4z" />
      <circle cx="19" cy="151" r="2" />
    </svg>
  </NavBar>
)

const ModelSpace = () => (
  <Canvas>
    <ViewLabel>[−][俯视][二维线框]</ViewLabel>
    <ViewButtons>
      <button aria-label="最小化视口"><Icon name="minimize" size={9} /></button>
      <button aria-label="还原视口"><Icon name="restore" size={9} /></button>
      <button aria-label="关闭视口"><Icon name="closeX" size={9} /></button>
    </ViewButtons>
    <DrawingText>
      <span>FDS</span>
      <span>FSD</span>
    </DrawingText>
    <Compass />
    <Navigation />
    <UcsIcon width="64" height="64" fill="none" stroke="#c8c8c8">
      <path d="M10.500 21v33M14 57.500h33M7.500 54.500h6v6h-6z" />
      <g fontSize="16" fill="#b8b8b8" stroke="none" fontFamily="Liberation Sans">
        <text x="10" y="18">Y</text>
        <text x="49" y="58">X</text>
      </g>
    </UcsIcon>
    <QuickProperties />
    <Markup width="996" height="344">
      <path fill="#0d86f2" d="M184 104h8v8h-8zM837 103v9l9-4z" />
      <path stroke="#e8e8e8" fill="none" d="M607 196.500h23M635 196.500h23M632.500 171v23M632.500 199v23M630.500 194.500h4v4h-4z" />
      <g fill="#f20d0d" stroke="#f20d0d" strokeWidth="2">
        <path d="M172 233 320 154M773 165 484 147" />
        <path stroke="none" d="m336 146-14 12-5-8zM466 145l18-3-1 10z" />
      </g>
      <circle cx="848" cy="305" r="7" fill="#b9b9b9" />
      <circle cx="864" cy="306" r="7" fill="#b9b9b9" />
    </Markup>
    <FloatBall>75</FloatBall>
  </Canvas>
)

class App extends Component {
  state = { command: "" }

  handleCommandChange = event => {
    this.setState({ command: event.target.value })
  }

  render() {
    return (
      <Page>
        <GlobalStyle />
        <TopBar />
        <RibbonBar />
        <FileTabs>
          <FileTab href="#">开始</FileTab>
          <FileTab href="#" $active>
            Drawing2*
            <svg width="6" height="6" stroke="#555"><path d="m0 0 6 6M6 0 0 6" /></svg>
          </FileTab>
          <NewTab aria-label="新图形"><Icon name="plus" size={8} /></NewTab>
        </FileTabs>
        <ModelSpace />
        <Command>
          <CommandSide>
            <svg width="13" height="5" stroke="#ccc" strokeDasharray="1 1">
              <path d="M0 .5h13M0 2.500h13M0 4.500h13" />
            </svg>
            <Icon name="closeX" size={8} />
            <Icon name="wrench" size={13} />
          </CommandSide>
          <div>
            <History>命令:<code>'_.quickproperties</code></History>
            <Prompt>
              <Icon name="terminal" size={12} height={10} />
              <Caret size={4} color="#777" />
              <PromptInput
                aria-label="命令"
                placeholder="键入命令"
                value={this.state.command}
                onChange={this.handleCommandChange}
              />
            </Prompt>
          </div>
        </Command>
        <StatusBar>
          <LayoutTabs>
            <LayoutTab href="#" $active>模型</LayoutTab>
            <LayoutTab href="#">布局1</LayoutTab>
            <LayoutTab href="#">布局2</LayoutTab>
            <LayoutTab href="#" aria-label="新布局">+</LayoutTab>
          </LayoutTabs>
          <StatusTools>
            {statusItems.map((item, i) => (
              <StatusCell
                key={i}
                $width={item.width}
                $on={item.on}
                $split={item.split}
                aria-label={item.text || item.icon || "选项"}
              >
                {item.text}
                {item.icon && <Icon name={item.icon} />}
                {item.caret && <Caret />}
              </StatusCell>
            ))}
          </StatusTools>
        </StatusBar>
        <Watermark>
          <svg width="36" height="38" viewBox="0 0 36 38" fill="none" stroke="#c9cfe0" strokeWidth="3">
            <path d="M3 8v20c0 6 4 8 9 6l18-10c4-3 4-7 0-10L15 4c-4-2-6 0-6 4v17c0 2 1 3 3 4" />
            <path fill="#c9cfe0" stroke="none" d="M14 12v12l9-6zM24 13h2v9h-2z" />
          </svg>
          <Brand>
            <BrandName>
              {["溜", "溜", "自", "学"].map((char, i) => (
                <span key={i}>{char}</span>
              ))}
            </BrandName>
            zixue.3D66.COM
          </Brand>
        </Watermark>
      </Page>
    )
  }
}

export default App
